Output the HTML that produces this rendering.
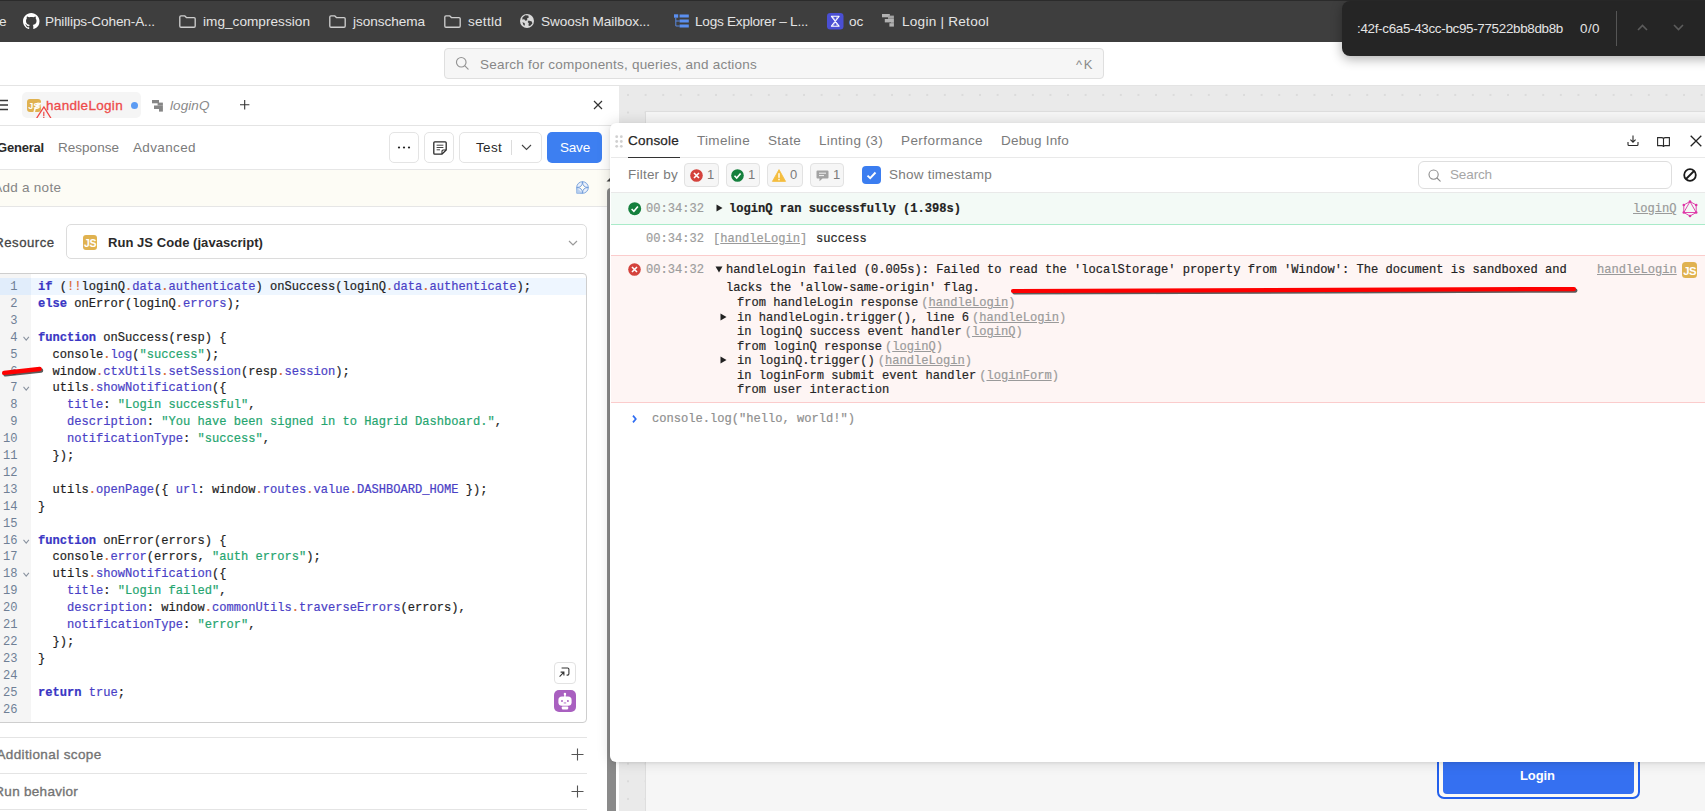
<!DOCTYPE html>
<html lang="en"><head>
<meta charset="utf-8">
<title>Login | Retool</title>
<style>
*{box-sizing:border-box;margin:0;padding:0}
html,body{width:1705px;height:811px;overflow:hidden;background:#fff}
body{position:relative;font-family:"Liberation Sans",sans-serif;font-size:13px;color:#333}
.a{position:absolute}
.t{position:absolute;white-space:pre;line-height:16px;height:16px;font-size:13.5px}
svg{position:absolute;overflow:visible}
.hl{position:absolute;height:1px;background:#e4e4e4}
.mono{font-family:"Liberation Mono","DejaVu Sans Mono",monospace;font-size:12.09px}
/* bookmarks */
.bm{color:#e4e4e4;font-size:13.6px;top:14px}
.fd{color:#e4e4e4;font-size:13.4px;top:21px}
/* panel text colours */
.g{color:#7b7b7b}
.d{color:#2b2b2b}
/* code */
.cl{position:absolute;left:38px;white-space:pre;line-height:17px;height:17px;color:#1f1f1f;-webkit-text-stroke:.2px}
.ln{position:absolute;left:0;width:17.5px;text-align:right;white-space:pre;line-height:17px;height:17px;color:#6f7f95}
.k{color:#3a36c4;font-weight:bold}
.p{color:#4a3fc6}
.s{color:#25a56f}
.o{color:#d9642c}
.cr{position:absolute;white-space:pre;line-height:15px;height:15px;color:#262626;-webkit-text-stroke:.2px}
.ts,.cr.ts{color:#9d9d9d}
.lk,.cr.lk{color:#9a9a9a;text-decoration:underline}
</style>
</head>
<body>

<!-- ============ CANVAS ============ -->
<div class="a" id="canvas" style="left:619px;top:86px;width:1086px;height:725px;background:#eaeaea"></div>
<svg style="left:619px;top:86px" width="1086" height="725">
  <defs><pattern id="dots" x="8.05" y="7.9" width="17.6" height="17.6" patternUnits="userSpaceOnUse"><rect x="0" y="0" width="1.9" height="1.9" rx=".5" fill="#d9d9d9"></rect></pattern></defs>
  <rect x="0" y="0" width="1086" height="725" fill="url(#dots)"></rect>
</svg>
<div class="a" id="frame" style="left:645px;top:111px;width:1100px;height:720px;background:#f6f6f6;border:1px solid #dedede"></div>
<!-- login button on canvas -->
<div class="a" style="left:1437px;top:740px;width:203px;height:59px;border:2px solid #2360ec;border-radius:7px;background:#fcfaf6"></div>
<div class="a" style="left:1443px;top:745px;width:191px;height:49px;background:#3570f1;border-radius:4px"></div>
<div class="t" style="left: 1520px; top: 768px; color: rgb(255, 255, 255); font-weight: bold; font-size: 13px; letter-spacing: -0.078px;">Login</div>

<!-- ============ LEFT PANEL ============ -->
<div class="a" id="left" style="left:0;top:86px;width:619px;height:725px;background:#fff"></div>
<!--LEFT-START-->
<!-- tabs row -->
<svg style="left:-3px;top:99px" width="12" height="12" viewBox="0 0 12 12" stroke="#3a3a3a" stroke-width="1.3" fill="none"><path d="M0 1.5H11M0 6H11M0 10.5H11"></path></svg>
<div class="a" style="left:22px;top:92px;width:119px;height:26px;background:#f5f5f5;border-radius:5px"></div>
<div class="a" style="left:27px;top:99px;width:14.2px;height:13px;background:#e0b250;border-radius:3px"></div>
<div class="t" style="left:28.3px;top:97.6px;color:#fff;font-weight:bold;font-size:9px;letter-spacing:.3px">JS</div>
<svg style="left:20px;top:92px" width="40" height="26" viewBox="20 92 40 26"><defs><clipPath id="jc"><rect x="27" y="99" width="14.2" height="13" rx="3"></rect></clipPath><clipPath id="tc"><rect x="22" y="92" width="119" height="26"></rect></clipPath></defs><g clip-path="url(#jc)"><circle cx="43.4" cy="112.3" r="9.2" fill="none" stroke="#fff" stroke-width="1.7" opacity=".92"></circle><ellipse cx="38.3" cy="105.3" rx="2.4" ry="3" fill="#fff" opacity=".55"></ellipse></g><g clip-path="url(#tc)" fill="none" stroke="#ef4444"><path d="M36.1 119 L43.9 107 L51.4 119" stroke-width="1.25"></path><path d="M43.8 111.7V115.9" stroke-width="1.2"></path><path d="M43.8 116.8V118" stroke-width="1.2"></path></g></svg>
<div class="t" style="left: 46px; top: 98px; color: rgb(238, 74, 74); -webkit-text-stroke: 0.3px rgb(238, 74, 74); letter-spacing: 0.311px;">handleLogin</div>
<div class="a" style="left:131px;top:102px;width:7px;height:7px;border-radius:50%;background:#5b9bf3"></div>
<svg style="left:152px;top:99.5px" width="11" height="12" viewBox="0 0 11 12" fill="#868686"><rect x="0" y="0" width="7" height="3.3"></rect><rect x="5.6" y="2.6" width="5.3" height="3"></rect><rect x="2" y="5.5" width="8.9" height="3.5"></rect><rect x="7" y="8.8" width="3.9" height="2.8"></rect></svg>
<div class="t" style="left: 170px; top: 98px; color: rgb(138, 138, 138); font-style: italic; letter-spacing: 0.078px;">loginQ</div>
<svg style="left:240px;top:100.2px" width="9.4" height="9.6" viewBox="0 0 9.4 9.6" stroke="#333" stroke-width="1.1" fill="none"><path d="M4.7 0V9.6M0 4.8H9.4"></path></svg>
<svg style="left:593px;top:100px" width="10" height="10" viewBox="0 0 10 10" stroke="#333" stroke-width="1.2" fill="none"><path d="M1 1L9 9M9 1L1 9"></path></svg>
<div class="hl" style="left:0;top:125px;width:612px"></div>

<!-- toolbar row -->
<div class="t d" style="left: -3px; top: 140px; font-weight: bold; font-size: 13px; color: rgb(42, 42, 42); letter-spacing: -0.203px;">General</div>
<div class="t g" style="left: 58px; top: 140px; letter-spacing: 0.025px;">Response</div>
<div class="t g" style="left: 133px; top: 140px; letter-spacing: 0.369px;">Advanced</div>
<div class="a" style="left:389px;top:132px;width:30px;height:31px;border:1px solid #e4e4e4;border-radius:5px;background:#fff"></div>
<svg style="left:397px;top:146px" width="14" height="3" viewBox="0 0 14 3" fill="#222"><circle cx="2" cy="1.5" r="1.1"></circle><circle cx="7" cy="1.5" r="1.1"></circle><circle cx="12" cy="1.5" r="1.1"></circle></svg>
<div class="a" style="left:424px;top:132px;width:30px;height:31px;border:1px solid #e4e4e4;border-radius:5px;background:#fff"></div>
<svg style="left:433px;top:141px" width="14" height="14" viewBox="0 0 14 14" fill="none" stroke="#2a2a2a" stroke-width="1.3"><path d="M1.8 0.8H12.2Q13.2 0.8 13.2 1.8V9L9 13.2H1.8Q0.8 13.2 0.8 12.2V1.8Q0.8 0.8 1.8 0.8Z"></path><path d="M13 9H10Q9 9 9 10V13" stroke-width="1.1"></path><path d="M3.6 4.2H10.4M3.6 6.5H10.4M3.6 8.8H7" stroke-width="1" stroke="#444"></path></svg>
<div class="a" style="left:459px;top:132px;width:83px;height:31px;border:1px solid #e4e4e4;border-radius:5px;background:#fff"></div>
<div class="t d" style="left: 476px; top: 140px; color: rgb(42, 42, 42); letter-spacing: 0.309px;">Test</div>
<div class="a" style="left:511px;top:140px;width:1px;height:15px;background:#dcdcdc"></div>
<svg style="left:521px;top:144px" width="11" height="7" viewBox="0 0 11 7" fill="none" stroke="#444" stroke-width="1.1"><path d="M1 1L5.5 5.5L10 1"></path></svg>
<div class="a" style="left:547px;top:132px;width:55px;height:31px;border-radius:5px;background:#3d7ff1"></div>
<div class="t" style="left: 560px; top: 140px; color: rgb(255, 255, 255); letter-spacing: -0.195px;">Save</div>

<!-- note row -->
<div class="a" style="left:0;top:169px;width:612px;height:38px;background:#fdfcf5;border-top:1px solid #e6e6e6;border-bottom:1px solid #e6e6e6"></div>
<div class="t" style="left: -6.8px; top: 180px; color: rgb(133, 133, 133); letter-spacing: 0.269px;">Add a note</div>
<svg style="left:576px;top:181px" width="13" height="13" viewBox="0 0 13 13" fill="none" stroke="#6d9ad8" stroke-width=".9"><circle cx="6.5" cy="6.5" r="5.8" fill="#e9f0fb"></circle><path d="M6.5 .7Q6.5 6.5 12.3 6.5Q6.5 6.5 6.5 12.3Q6.5 6.5 .7 6.5Q6.5 6.5 6.5 .7Z" fill="#fdfcf5"></path><path d="M.7 6.5V12.3H6.5" fill="#b9d0ef" stroke="#8fb2e3"></path></svg>

<!-- resource row -->
<div class="t" style="left: -5.8px; top: 235px; color: rgb(69, 69, 69); font-size: 13.2px; -webkit-text-stroke: 0.3px rgb(69, 69, 69); letter-spacing: 0.493px;">Resource</div>
<div class="a" style="left:66px;top:224px;width:521px;height:35px;border:1px solid #dcdcdc;border-radius:5px;background:#fff"></div>
<div class="a" style="left:83px;top:235px;width:14px;height:14.6px;background:#e0b250;border-radius:3px"></div>
<div class="t" style="left:84px;top:235px;color:#fff;font-weight:bold;font-size:10.5px;letter-spacing:-0.4px">JS</div>
<div class="t" style="left: 108px; top: 235px; color: rgb(42, 42, 42); font-size: 13px; font-weight: bold; letter-spacing: 0.047px;">Run JS Code (javascript)</div>
<svg style="left:568px;top:240px" width="10" height="6" viewBox="0 0 10 6" fill="none" stroke="#9a9a9a" stroke-width="1.2"><path d="M1 1L5 5L9 1"></path></svg>

<!-- code editor -->
<div class="a" style="left:-4px;top:273px;width:591px;height:450px;border:1px solid #cecece;border-radius:4px;background:#fff;overflow:hidden">
  <div class="a" style="left:0;top:0;width:34px;height:450px;background:#f5f5f5"></div>
  <div class="a" style="left:0;top:4px;width:591px;height:17px;background:#eef6ff"></div>
  <div class="a" style="left:0;top:4px;width:34px;height:17px;background:#e1edfb"></div>
</div>
<!--CODE-START-->
<div class="ln mono" style="top:279.00px">1</div>
<div class="cl mono" style="top:279.00px"><span class="k">if</span> (<span class="o">!!</span>loginQ<span class="o">.</span><span class="p">data</span><span class="o">.</span><span class="p">authenticate</span>) onSuccess(loginQ<span class="o">.</span><span class="p">data</span><span class="o">.</span><span class="p">authenticate</span>);</div>
<div class="ln mono" style="top:295.90px">2</div>
<div class="cl mono" style="top:295.90px"><span class="k">else</span> onError(loginQ<span class="o">.</span><span class="p">errors</span>);</div>
<div class="ln mono" style="top:312.80px">3</div>
<div class="ln mono" style="top:329.70px">4</div>
<svg style="left:23px;top:335.70px" width="6.4" height="5" viewBox="0 0 6.4 5" fill="none" stroke="#8a93a0" stroke-width="1.05"><path d="M.5 .8L3.2 4.2L5.9 .8"></path></svg>
<div class="cl mono" style="top:329.70px"><span class="k">function</span> onSuccess(resp) {</div>
<div class="ln mono" style="top:346.60px">5</div>
<div class="cl mono" style="top:346.60px">  console<span class="o">.</span><span class="p">log</span>(<span class="s">"success"</span>);</div>
<div class="ln mono" style="top:363.50px">6</div>
<div class="cl mono" style="top:363.50px">  window<span class="o">.</span><span class="p">ctxUtils</span><span class="o">.</span><span class="p">setSession</span>(resp<span class="o">.</span><span class="p">session</span>);</div>
<div class="ln mono" style="top:380.40px">7</div>
<svg style="left:23px;top:386.40px" width="6.4" height="5" viewBox="0 0 6.4 5" fill="none" stroke="#8a93a0" stroke-width="1.05"><path d="M.5 .8L3.2 4.2L5.9 .8"></path></svg>
<div class="cl mono" style="top:380.40px">  utils<span class="o">.</span><span class="p">showNotification</span>({</div>
<div class="ln mono" style="top:397.30px">8</div>
<div class="cl mono" style="top:397.30px"><span class="p">    title</span>: <span class="s">"Login successful"</span>,</div>
<div class="ln mono" style="top:414.20px">9</div>
<div class="cl mono" style="top:414.20px"><span class="p">    description</span>: <span class="s">"You have been signed in to Hagrid Dashboard."</span>,</div>
<div class="ln mono" style="top:431.10px">10</div>
<div class="cl mono" style="top:431.10px"><span class="p">    notificationType</span>: <span class="s">"success"</span>,</div>
<div class="ln mono" style="top:448.00px">11</div>
<div class="cl mono" style="top:448.00px">  });</div>
<div class="ln mono" style="top:464.90px">12</div>
<div class="ln mono" style="top:481.80px">13</div>
<div class="cl mono" style="top:481.80px">  utils<span class="o">.</span><span class="p">openPage</span>({ <span class="p">url</span>: window<span class="o">.</span><span class="p">routes</span><span class="o">.</span><span class="p">value</span><span class="o">.</span><span class="p">DASHBOARD_HOME</span> });</div>
<div class="ln mono" style="top:498.70px">14</div>
<div class="cl mono" style="top:498.70px">}</div>
<div class="ln mono" style="top:515.60px">15</div>
<div class="ln mono" style="top:532.50px">16</div>
<svg style="left:23px;top:538.50px" width="6.4" height="5" viewBox="0 0 6.4 5" fill="none" stroke="#8a93a0" stroke-width="1.05"><path d="M.5 .8L3.2 4.2L5.9 .8"></path></svg>
<div class="cl mono" style="top:532.50px"><span class="k">function</span> onError(errors) {</div>
<div class="ln mono" style="top:549.40px">17</div>
<div class="cl mono" style="top:549.40px">  console<span class="o">.</span><span class="p">error</span>(errors, <span class="s">"auth errors"</span>);</div>
<div class="ln mono" style="top:566.30px">18</div>
<svg style="left:23px;top:572.30px" width="6.4" height="5" viewBox="0 0 6.4 5" fill="none" stroke="#8a93a0" stroke-width="1.05"><path d="M.5 .8L3.2 4.2L5.9 .8"></path></svg>
<div class="cl mono" style="top:566.30px">  utils<span class="o">.</span><span class="p">showNotification</span>({</div>
<div class="ln mono" style="top:583.20px">19</div>
<div class="cl mono" style="top:583.20px"><span class="p">    title</span>: <span class="s">"Login failed"</span>,</div>
<div class="ln mono" style="top:600.10px">20</div>
<div class="cl mono" style="top:600.10px"><span class="p">    description</span>: window<span class="o">.</span><span class="p">commonUtils</span><span class="o">.</span><span class="p">traverseErrors</span>(errors),</div>
<div class="ln mono" style="top:617.00px">21</div>
<div class="cl mono" style="top:617.00px"><span class="p">    notificationType</span>: <span class="s">"error"</span>,</div>
<div class="ln mono" style="top:633.90px">22</div>
<div class="cl mono" style="top:633.90px">  });</div>
<div class="ln mono" style="top:650.80px">23</div>
<div class="cl mono" style="top:650.80px">}</div>
<div class="ln mono" style="top:667.70px">24</div>
<div class="ln mono" style="top:684.60px">25</div>
<div class="cl mono" style="top:684.60px"><span class="k">return</span> <span class="p">true</span>;</div>
<div class="ln mono" style="top:701.50px">26</div>
<!--CODE-END-->
<div class="a" style="left:554px;top:662px;width:22px;height:22px;border:1px solid #e2e2e2;border-radius:4px;background:#fff"></div>
<svg style="left:554px;top:662px" width="22" height="22" viewBox="0 0 22 22" fill="none" stroke="#333" stroke-width="1.1"><path d="M7.6 6H13.6Q14.9 6 14.9 7.3V11.8Q14.9 13.1 13.6 13.1H12.6"></path><path d="M5.6 14.6L9.9 10.2M6.6 10.1H9.9V13.4"></path></svg>
<div class="a" style="left:554px;top:690px;width:22px;height:22px;border-radius:5px;background:#a960c0"></div>
<svg style="left:554px;top:690px" width="22" height="22" viewBox="0 0 22 22" fill="#fff"><rect x="10.2" y="4" width="1.5" height="3"></rect><circle cx="10.95" cy="4.1" r="1.25"></circle><rect x="4.4" y="6.5" width="13.2" height="9.3" rx="3.6"></rect><rect x="7.8" y="16.4" width="6.4" height="3" rx=".8"></rect><circle cx="8" cy="11" r=".95" fill="#a960c0"></circle><circle cx="13.9" cy="11" r=".95" fill="#a960c0"></circle><rect x="9.7" y="12.5" width="2.5" height=".9" fill="#a960c0"></rect></svg>

<!-- accordions -->
<div class="hl" style="left:0;top:737px;width:587px"></div>
<div class="t" style="left: -3.6px; top: 747px; color: rgb(115, 115, 115); -webkit-text-stroke: 0.35px rgb(115, 115, 115); letter-spacing: 0.383px;">Additional scope</div>
<svg style="left:571px;top:748px" width="13" height="13" viewBox="0 0 13 13" stroke="#555" stroke-width="1.1" fill="none"><path d="M6.5 .5V12.5M.5 6.5H12.5"></path></svg>
<div class="hl" style="left:0;top:773px;width:587px"></div>
<div class="t" style="left: -5.7px; top: 784px; color: rgb(115, 115, 115); -webkit-text-stroke: 0.35px rgb(115, 115, 115); letter-spacing: 0.291px;">Run behavior</div>
<svg style="left:571px;top:785px" width="13" height="13" viewBox="0 0 13 13" stroke="#555" stroke-width="1.1" fill="none"><path d="M6.5 .5V12.5M.5 6.5H12.5"></path></svg>
<div class="hl" style="left:0;top:809px;width:587px"></div>

<svg style="left:0;top:0" width="60" height="811" viewBox="0 0 60 811" fill="none" stroke-linecap="round"><defs><filter id="sh2" x="-20%" y="-100%" width="140%" height="300%"><feGaussianBlur stdDeviation=".5"></feGaussianBlur></filter></defs><path d="M4.1 372.9 L39.7 369" stroke="#333" stroke-opacity=".8" stroke-width="4.3" transform="translate(1.4,1.5)" filter="url(#sh2)"></path><path d="M4.1 372.9 L39.7 369" stroke="#fe0000" stroke-width="4.3"></path></svg>
<!--LEFT-END-->

<!-- scrollbar -->
<svg style="left:606px;top:177px" width="5" height="5" viewBox="0 0 5 5"><path d="M4.5 .5V4.5H.5Z" fill="#444"></path></svg>
<div class="a" style="left:607px;top:188px;width:9px;height:640px;background:#8a8a8a;border-radius:4px 4px 0 0"></div>

<!-- ============ CONSOLE ============ -->
<div class="a" id="con" style="left:610px;top:123px;width:1110px;height:639px;background:#fff;border-radius:6px;box-shadow:0 0 14px rgba(0,0,0,.15),0 1px 3px rgba(0,0,0,.07)"></div>
<!--CON-START-->
<!-- drag handle -->
<svg style="left:615px;top:135px" width="8" height="13" viewBox="0 0 8 13" fill="#d0d0d0"><circle cx="1.7" cy="1.7" r="1.4"></circle><circle cx="6.3" cy="1.7" r="1.4"></circle><circle cx="1.7" cy="6.5" r="1.4"></circle><circle cx="6.3" cy="6.5" r="1.4"></circle><circle cx="1.7" cy="11.3" r="1.4"></circle><circle cx="6.3" cy="11.3" r="1.4"></circle></svg>
<!-- tabs -->
<div class="t" style="left: 628px; top: 133px; color: rgb(38, 38, 38); -webkit-text-stroke: 0.25px rgb(38, 38, 38); letter-spacing: 0.21px;">Console</div>
<div class="a" style="left:628px;top:156.7px;width:52px;height:1.5px;background:#333;z-index:3"></div>
<div class="t g" style="left: 697px; top: 133px; letter-spacing: 0.311px;">Timeline</div>
<div class="t g" style="left: 768px; top: 133px; letter-spacing: 0.294px;">State</div>
<div class="t g" style="left: 819px; top: 133px; letter-spacing: 0.359px;">Linting (3)</div>
<div class="t g" style="left: 901px; top: 133px; letter-spacing: 0.428px;">Performance</div>
<div class="t g" style="left: 1001px; top: 133px; letter-spacing: 0.194px;">Debug Info</div>
<svg style="left:1627px;top:135px" width="12" height="12" viewBox="0 0 12 12" fill="none" stroke="#2a2a2a" stroke-width="1.1"><path d="M1 7V9.5Q1 10.5 2 10.5H10Q11 10.5 11 9.5V7"></path><path d="M6 .5V7M3.4 4.6L6 7.2L8.6 4.6"></path></svg>
<svg style="left:1657px;top:136.7px" width="13" height="11" viewBox="0 0 13 11" fill="none" stroke="#2a2a2a" stroke-width="1.1"><path d="M6.5 1.5Q6 .6 4.5 .6H.6V8.6H5Q6.5 8.6 6.5 10Q6.5 8.6 8 8.6H12.4V.6H8.5Q7 .6 6.5 1.5V9.5"></path></svg>
<svg style="left:1690px;top:135px" width="12" height="12" viewBox="0 0 12 12" fill="none" stroke="#222" stroke-width="1.3"><path d="M.7 .7L11.3 11.3M11.3 .7L.7 11.3"></path></svg>
<div class="hl" style="left:611px;top:157px;width:1094px;background:#e9e9e9"></div>

<!-- filter row -->
<div class="t g" style="left: 628px; top: 167px; letter-spacing: 0.22px;">Filter by</div>
<div class="a" style="left:684px;top:163px;width:35px;height:24px;border:1px solid #e2e2e2;border-radius:4px;background:#f6f6f6"></div>
<svg style="left:690px;top:169px" width="13" height="13" viewBox="0 0 13 13"><circle cx="6.5" cy="6.5" r="6.3" fill="#d4423c"></circle><path d="M4 4L9 9M9 4L4 9" stroke="#fff" stroke-width="1.6" fill="none"></path></svg>
<div class="t g" style="left:707px;top:167px;font-size:13px">1</div>
<div class="a" style="left:726px;top:163px;width:34px;height:24px;border:1px solid #e2e2e2;border-radius:4px;background:#f6f6f6"></div>
<svg style="left:731px;top:169px" width="13" height="13" viewBox="0 0 13 13"><circle cx="6.5" cy="6.5" r="6.3" fill="#15803d"></circle><path d="M3.5 6.8L5.7 9L9.6 4.4" stroke="#fff" stroke-width="1.6" fill="none"></path></svg>
<div class="t g" style="left:748px;top:167px;font-size:13px">1</div>
<div class="a" style="left:767px;top:163px;width:36px;height:24px;border:1px solid #e2e2e2;border-radius:4px;background:#f6f6f6"></div>
<svg style="left:772px;top:169px" width="14" height="13" viewBox="0 0 14 13"><path d="M7 .6L13.6 12.4H.4Z" fill="#f4bd3e" stroke="#f4bd3e" stroke-width=".8" stroke-linejoin="round"></path><rect x="6.3" y="4.2" width="1.4" height="4.6" fill="#fff"></rect><rect x="6.3" y="9.8" width="1.4" height="1.5" fill="#fff"></rect></svg>
<div class="t g" style="left:790px;top:167px;font-size:13px">0</div>
<div class="a" style="left:810px;top:163px;width:34px;height:24px;border:1px solid #e2e2e2;border-radius:4px;background:#f6f6f6"></div>
<svg style="left:816px;top:170px" width="13" height="12" viewBox="0 0 13 12"><path d="M1.5 .5H11.5Q12.5 .5 12.5 1.5V7.5Q12.5 8.5 11.5 8.5H6.5L3.5 11.2V8.5H1.5Q.5 8.5 .5 7.5V1.5Q.5 .5 1.5 .5Z" fill="#a2a2a2"></path><path d="M3 3.2H10M3 5.6H8" stroke="#f3f3f3" stroke-width="1"></path></svg>
<div class="t g" style="left:833px;top:167px;font-size:13px">1</div>
<div class="a" style="left:862px;top:166px;width:18.8px;height:18px;border-radius:4px;background:#3b7df0"></div>
<svg style="left:866px;top:171px" width="11" height="9" viewBox="0 0 11 9" fill="none" stroke="#fff" stroke-width="1.9"><path d="M1.5 4.6L4.2 7.2L9.5 1.5"></path></svg>
<div class="t g" style="left: 889px; top: 167px; letter-spacing: 0.229px;">Show timestamp</div>
<div class="a" style="left:1418px;top:161px;width:254px;height:28px;border:1px solid #dedede;border-radius:6px;background:#fff"></div>
<svg style="left:1428px;top:169px" width="13" height="13" viewBox="0 0 13 13" fill="none" stroke="#8c8c8c" stroke-width="1.1" stroke-linecap="round"><circle cx="5.6" cy="5.6" r="4.6"></circle><path d="M9 9L12.2 12.2"></path></svg>
<div class="t" style="left: 1450px; top: 167px; color: rgb(166, 166, 166); letter-spacing: -0.13px;">Search</div>
<svg style="left:1683px;top:168px" width="14" height="14" viewBox="0 0 14 14" fill="none" stroke="#1a1a1a" stroke-width="1.8"><circle cx="7" cy="7" r="5.8"></circle><path d="M11 3L3 11"></path></svg>
<div class="hl" style="left:611px;top:192px;width:1094px;background:#e9e9e9"></div>

<!-- row 1 success -->
<div class="a" style="left:611px;top:193px;width:1094px;height:32px;background:#f3faf6;border-bottom:1px solid #a9ebc9"></div>
<svg style="left:628px;top:202.3px" width="13.4" height="13.4" viewBox="0 0 13 13"><circle cx="6.5" cy="6.5" r="6.3" fill="#15803d"></circle><path d="M3.5 6.8L5.7 9L9.6 4.4" stroke="#fff" stroke-width="1.6" fill="none"></path></svg>
<div class="cr mono ts" style="left:646px;top:202px">00:34:32</div>
<svg style="left:716px;top:204px" width="7" height="8" viewBox="0 0 7 8" fill="#222"><path d="M.5 .5L6.5 4L.5 7.5Z"></path></svg>
<div class="cr mono" style="left:729px;top:202px;font-weight:bold;color:#222">loginQ ran successfully (1.398s)</div>
<div class="cr mono lk" style="left:1633px;top:202px">loginQ</div>
<svg style="left:1682px;top:200.3px" width="16" height="18" viewBox="0 0 16 18" fill="none" stroke="#de33a6" stroke-width=".9"><path d="M8 1.5L14.2 5V12.5L8 16L1.8 12.5V5Z"></path><path d="M8 1.5L14.2 12.5H1.8Z"></path><g fill="#de33a6" stroke="none"><circle cx="8" cy="1.5" r="1.3"></circle><circle cx="14.2" cy="5" r="1.3"></circle><circle cx="14.2" cy="12.5" r="1.3"></circle><circle cx="8" cy="16" r="1.3"></circle><circle cx="1.8" cy="12.5" r="1.3"></circle><circle cx="1.8" cy="5" r="1.3"></circle></g></svg>

<!-- row 2 log -->
<div class="cr mono ts" style="left:646px;top:232px">00:34:32</div>
<div class="cr mono" style="left:713px;top:232px;color:#9a9a9a">[<span class="lk">handleLogin</span>]</div>
<div class="cr mono" style="left:816px;top:232px">success</div>

<!-- row 3 error -->
<div class="a" style="left:611px;top:255px;width:1094px;height:148px;background:#fef5f4;border-top:1px solid #fbcccc;border-bottom:1px solid #fbcccc"></div>
<svg style="left:628px;top:263px" width="13" height="13" viewBox="0 0 13 13"><circle cx="6.5" cy="6.5" r="6.3" fill="#d4423c"></circle><path d="M4 4L9 9M9 4L4 9" stroke="#fff" stroke-width="1.6" fill="none"></path></svg>
<div class="cr mono ts" style="left:646px;top:263px">00:34:32</div>
<svg style="left:715px;top:266px" width="8" height="7" viewBox="0 0 8 7" fill="#222"><path d="M.5 .5H7.5L4 6.5Z"></path></svg>
<div class="cr mono" style="left:726px;top:263px;color:#222">handleLogin failed (0.005s): Failed to read the 'localStorage' property from 'Window': The document is sandboxed and</div>
<div class="cr mono" style="left:726px;top:281px;color:#222">lacks the 'allow-same-origin' flag.</div>
<div class="cr mono" style="left:737px;top:296px">from handleLogin response<span class="ts" style="margin-left:3px">(<span class="lk">handleLogin</span>)</span></div>
<svg style="left:720px;top:313px" width="7" height="8" viewBox="0 0 7 8" fill="#222"><path d="M.5 .5L6.5 4L.5 7.5Z"></path></svg>
<div class="cr mono" style="left:737px;top:311px">in handleLogin.trigger(), line 6<span class="ts" style="margin-left:3px">(<span class="lk">handleLogin</span>)</span></div>
<div class="cr mono" style="left:737px;top:325px">in loginQ success event handler<span class="ts" style="margin-left:3px">(<span class="lk">loginQ</span>)</span></div>
<div class="cr mono" style="left:737px;top:340px">from loginQ response<span class="ts" style="margin-left:3px">(<span class="lk">loginQ</span>)</span></div>
<svg style="left:720px;top:356px" width="7" height="8" viewBox="0 0 7 8" fill="#222"><path d="M.5 .5L6.5 4L.5 7.5Z"></path></svg>
<div class="cr mono" style="left:737px;top:354px">in loginQ.trigger()<span class="ts" style="margin-left:3px">(<span class="lk">handleLogin</span>)</span></div>
<div class="cr mono" style="left:737px;top:369px">in loginForm submit event handler<span class="ts" style="margin-left:3px">(<span class="lk">loginForm</span>)</span></div>
<div class="cr mono" style="left:737px;top:383px">from user interaction</div>
<div class="cr mono lk" style="left:1597px;top:263px">handleLogin</div>
<div class="a" style="left:1682px;top:262px;width:15px;height:16px;background:#e0b250;border-radius:3.5px"></div>
<div class="t" style="left:1683.2px;top:262.6px;color:#fff;font-weight:bold;font-size:11.3px;letter-spacing:-0.45px">JS</div>

<!-- row 4 input -->
<svg style="left:632.2px;top:414.6px" width="5" height="8" viewBox="0 0 5 8" fill="none" stroke="#2f6df2" stroke-width="1.7"><path d="M1 .6L3.8 4L1 7.4"></path></svg>
<div class="cr mono" style="left:652px;top:412px;color:#8f8f8f">console.log("hello, world!")</div>

<!-- red annotations -->
<svg style="left:0;top:0" width="1705" height="811" viewBox="0 0 1705 811" fill="none" stroke-linecap="round"><defs><filter id="sh" x="-5%" y="-200%" width="110%" height="500%"><feGaussianBlur stdDeviation=".5"></feGaussianBlur></filter></defs><path d="M1013 291 L1574 289.05" stroke="#333" stroke-opacity=".8" stroke-width="4.2" transform="translate(1.4,1.5)" filter="url(#sh)"></path><path d="M1013 291 L1574 289.05" stroke="#fe0000" stroke-width="4.2"></path></svg>

<!--CON-END-->

<!-- ============ RETOOL HEADER ============ -->
<div class="a" id="hdr" style="left:0;top:42px;width:1705px;height:44px;background:#fff"></div>
<div class="hl" style="left:0;top:85px;width:1705px"></div>
<div class="a" style="left:444px;top:48px;width:660px;height:31px;background:#f6f6f6;border:1px solid #dfdfdf;border-radius:4px"></div>
<svg style="left:455px;top:56px" width="14.6" height="14.6" viewBox="0 0 14 14" fill="none" stroke="#939393" stroke-width="1.1" stroke-linecap="round"><circle cx="6" cy="6" r="4.6"></circle><path d="M9.5 9.5 L12.6 12.6"></path></svg>
<div class="t" style="left: 480px; top: 57px; color: rgb(135, 135, 135); letter-spacing: 0.211px;">Search for components, queries, and actions</div>
<div class="t" style="left: 1076px; top: 57px; color: rgb(138, 138, 138); font-size: 13px; letter-spacing: 1.609px;">^K</div>

<!-- ============ BOOKMARKS BAR ============ -->
<div class="a" id="bm" style="left:0;top:0;width:1705px;height:42px;background:#3e3e3e"></div>
<div class="a" style="left:0;top:0;width:1705px;height:1px;background:#2b2b2b"></div>
<div class="t bm" style="left:-1px">e</div>
<div class="t bm" style="left: 45px; letter-spacing: -0.136px;">Phillips-Cohen-A...</div>
<div class="t bm" style="left: 203px; letter-spacing: 0.031px;">img_compression</div>
<div class="t bm" style="left: 353px; letter-spacing: -0.055px;">jsonschema</div>
<div class="t bm" style="left: 468px; letter-spacing: 0.25px;">settld</div>
<div class="t bm" style="left: 541px; letter-spacing: -0.077px;">Swoosh Mailbox...</div>
<div class="t bm" style="left: 695px; letter-spacing: -0.245px;">Logs Explorer – L...</div>
<div class="t bm" style="left: 849px; letter-spacing: -0.18px;">oc</div>
<div class="t bm" style="left: 902px; letter-spacing: 0.24px;">Login | Retool</div>

<svg style="left:22.5px;top:13px" width="16.5" height="16.5" viewBox="0 0 16 16" fill="#fff"><path d="M8 0C3.58 0 0 3.58 0 8c0 3.54 2.29 6.53 5.47 7.59.4.07.55-.17.55-.38 0-.19-.01-.82-.01-1.49-2.01.37-2.53-.49-2.69-.94-.09-.23-.48-.94-.82-1.13-.28-.15-.68-.52-.01-.53.63-.01 1.08.58 1.23.82.72 1.21 1.87.87 2.33.66.07-.52.28-.87.51-1.07-1.78-.2-3.64-.89-3.64-3.95 0-.87.31-1.59.82-2.15-.08-.2-.36-1.02.08-2.12 0 0 .67-.21 2.2.82.64-.18 1.32-.27 2-.27.68 0 1.36.09 2 .27 1.53-1.04 2.2-.82 2.2-.82.44 1.1.16 1.92.08 2.12.51.56.82 1.27.82 2.15 0 3.07-1.87 3.75-3.65 3.95.29.25.54.73.54 1.48 0 1.07-.01 1.93-.01 2.2 0 .21.15.46.55.38A8.013 8.013 0 0016 8c0-4.42-3.58-8-8-8z"></path></svg>
<svg style="left:178.5px;top:14.5px" width="17" height="13" viewBox="0 0 17 13" fill="none" stroke="#cdcdcd" stroke-width="1.35" stroke-linejoin="round"><path d="M.8 2Q.8 .8 2 .8H5.6L7.4 2.6H15Q16.2 2.6 16.2 3.8V11Q16.2 12.2 15 12.2H2Q.8 12.2 .8 11Z"></path></svg>
<svg style="left:328.5px;top:14.5px" width="17" height="13" viewBox="0 0 17 13" fill="none" stroke="#cdcdcd" stroke-width="1.35" stroke-linejoin="round"><path d="M.8 2Q.8 .8 2 .8H5.6L7.4 2.6H15Q16.2 2.6 16.2 3.8V11Q16.2 12.2 15 12.2H2Q.8 12.2 .8 11Z"></path></svg>
<svg style="left:443.5px;top:14.5px" width="17" height="13" viewBox="0 0 17 13" fill="none" stroke="#cdcdcd" stroke-width="1.35" stroke-linejoin="round"><path d="M.8 2Q.8 .8 2 .8H5.6L7.4 2.6H15Q16.2 2.6 16.2 3.8V11Q16.2 12.2 15 12.2H2Q.8 12.2 .8 11Z"></path></svg>
<svg style="left:520px;top:14px" width="14" height="14" viewBox="0 0 14 14"><circle cx="7" cy="7" r="7" fill="#d9d9d9"></circle><path d="M5.2 1.2L8.3 1.6L8.8 3.4L7 4.6L7.4 6.2L5.4 6.8L4.2 5.2L2.2 5.4L2.6 3.2Z M8.6 6.6L11.8 7.4L12.4 9.6L10 12L8.4 11.4L8.8 9.2L7.6 8Z M2.4 8.2L4.6 9L5 11.4L3.6 11.2Z" fill="#3e3e3e"></path></svg>
<svg style="left:673.5px;top:14px" width="15" height="14" viewBox="0 0 15 14" fill="#5b8ff0"><rect x="0" y=".3" width="4.2" height="3.4"></rect><rect x="5.6" y=".5" width="9.2" height="3"></rect><rect x="5.6" y="5.5" width="9.2" height="3"></rect><rect x="5.6" y="10.5" width="9.2" height="3"></rect><path d="M1.8 3.7V12H5.6M1.8 7H5.6" fill="none" stroke="#5b8ff0" stroke-width=".9"></path></svg>
<svg style="left:826.5px;top:13px" width="16.5" height="16.5" viewBox="0 0 16 16"><rect width="16" height="16" rx="3.2" fill="#4a4fd3"></rect><path d="M4.3 3.2H11.7L4.3 12.8H11.7Z" fill="none" stroke="#fff" stroke-width="1.05" stroke-linejoin="round"></path><path d="M6 3.4L8 8L10 3.4M6 12.6L8 8L10 12.6" fill="none" stroke="#dfe0ff" stroke-width=".6"></path></svg>
<svg style="left:882px;top:14.4px" width="12" height="13" viewBox="0 0 12 13" fill="#b2b2b2"><rect x="0" y="0" width="7.8" height="3.3"></rect><rect x="6" y="1.6" width="5.9" height="3.2" fill="#a4a4a4"></rect><rect x="2.8" y="5" width="9.1" height="3.4"></rect><rect x="7.4" y="9.2" width="4.5" height="3.4"></rect><rect x="9" y="8.2" width="2.9" height="1.4" fill="#a4a4a4"></rect></svg>


<!-- ============ FIND BAR ============ -->
<div class="a" id="find" style="left:1342px;top:1px;width:373px;height:55px;background:#252525;border-radius:8px 0 0 8px;box-shadow:0 3px 12px rgba(0,0,0,.32)"></div>
<div class="t fd" style="left: 1357px; letter-spacing: -0.31px;">:42f-c6a5-43cc-bc95-77522bb8db8b</div>
<div class="t fd" style="left: 1580px; letter-spacing: 0.458px;">0/0</div>
<div class="a" style="left:1616px;top:11px;width:1px;height:35px;background:#555"></div>
<svg style="left:1637px;top:24px" width="11" height="7" viewBox="0 0 11 7" fill="none" stroke="#5c5c5c" stroke-width="1.6"><path d="M1 6 L5.5 1.5 L10 6"></path></svg>
<svg style="left:1673px;top:24px" width="11" height="7" viewBox="0 0 11 7" fill="none" stroke="#5c5c5c" stroke-width="1.6"><path d="M1 1 L5.5 5.5 L10 1"></path></svg>



</body></html>
